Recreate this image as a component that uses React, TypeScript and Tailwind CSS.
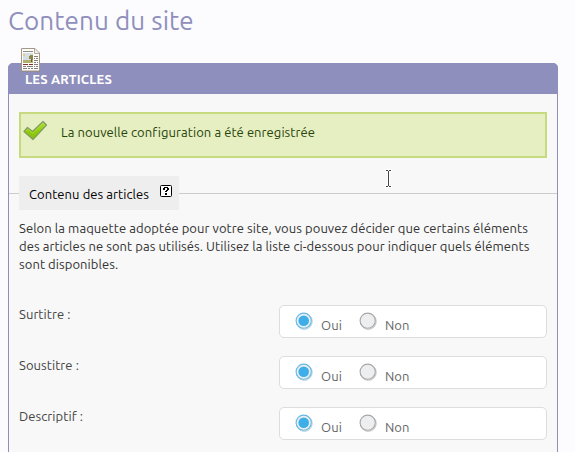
import React from "react";

const fields = ["Surtitre :", "Soustitre :", "Descriptif :"];

function ArticleIcon() {
  return (
    <svg className="absolute left-[11px] -top-4" width="22" height="25" viewBox="0 0 22 25">
      <path d="M1.5 1H15l5 5v18H1.5z" fill="#77716a" opacity=".45" />
      <path d="M1.5.5H15L19.5 5V23H1.5z" fill="#fdfcf8" stroke="#a39789" />
      <path d="M14.5 1v4.5H19" fill="#f1eee9" stroke="#b5aba0" />
      <path d="M3 3.5h10" stroke="#8f8b86" />
      <path d="M3 5h10v10H3z" fill="#d3dfe2" />
      <path d="M3 6h2v2H3z" fill="#f0c98c" />
      <path d="M3 12h10v3H3z" fill="#b1b06d" />
      <path d="M9 8h1V7h3v5h-2v-1H9z" fill="#8b8845" />
      <path d="M11.5 11v3" stroke="#685c39" />
      <path d="M3 16.5h5m1 0h4" stroke="#842f32" />
      <path d="M3 18.5h3m1 0h6M3 20.5h4m1 0h2m1 0h2M14 8.5h4M14 10.5h1m1 0h2M14 12.5h4M14 14.5h2m1 0h1M14 16.5h4M14 18.5h1m1 0h2M14 20.5h4" stroke="#85807c" />
    </svg>
  );
}

function CheckIcon() {
  return (
    <svg className="absolute left-[2px] top-[6px]" width="25" height="22" viewBox="0 0 25 22">
      <defs>
        <linearGradient id="check" x2="0" y2="1">
          <stop stopColor="#b6df43" />
          <stop offset=".5" stopColor="#91ce0c" />
          <stop offset="1" stopColor="#86bd08" />
        </linearGradient>
      </defs>
      <path d="M1 11.5 4.5 7.5l5 4L20 1.5l3.5 3.5L10 19.5z" fill="url(#check)" stroke="#829c63" strokeWidth="1.2" strokeLinejoin="round" />
      <path d="m3 11 1.7-1.9 5 4.2L20 3.2" fill="none" stroke="#b4e23a" strokeWidth=".7" />
    </svg>
  );
}

function Radio({ checked = false }: { checked?: boolean }) {
  return (
    <svg className="-mt-px" width="18" height="18" viewBox="0 0 18 18">
      <circle cx="9.3" cy="9.4" r="7.9" fill="none" stroke={checked ? "#a7cadd" : "#bdbdbd"} strokeWidth="1" />
      <circle cx="8.7" cy="8.7" r="7.6" fill="#edeef0" stroke={checked ? "#65b9e3" : "#a8a8a9"} strokeWidth="1.1" />
      {checked && <circle cx="8.7" cy="8.7" r="5.3" fill="#3daee9" />}
    </svg>
  );
}

function IBeam() {
  return (
    <svg className="absolute left-[375px] top-[104px]" width="10" height="22" viewBox="0 0 10 22">
      <path d="M1 2.5h7M4.5 2v17M1 18.5h7" stroke="white" strokeWidth="3" />
      <path d="M2 2.5h2m1 0h2M4.5 3v15M2 18.5h2m1 0h2" stroke="#444" />
    </svg>
  );
}

export default function App() {
  return (
    <main className="h-[452px] w-[575px] overflow-hidden bg-[#fcfcff] px-2 font-['Ubuntu','Noto_Sans',sans-serif] text-[13px] leading-[18px] tracking-[0.07px] text-[#333]">
      <h1 className="h-[63px] pt-[3px] text-[26px] leading-9 tracking-[0.1px] text-[#8f8fbd]"><span>Contenu du site</span></h1>
      <section className="relative h-[400px] w-[550px] rounded-t-[5px] border border-[#8f8fbd] bg-[#f8f8f8]">
        <h2 className="-mx-px -mt-px h-[31px] rounded-t-[5px] bg-[#8f8fbd] pl-[17px] pt-[7px] font-bold tracking-[0.15px] text-white"><span>LES ARTICLES</span></h2>
        <ArticleIcon />
        <div className="relative mx-[10px] mt-[18px] h-[46px] border-2 border-[#c8da7f] bg-[#e6efc2] pl-10 pt-[9px] text-[#264409]">
          <CheckIcon />
          <span>La nouvelle configuration a été enregistrée</span>
        </div>
        <IBeam />
        <div className="mt-[18px] flex h-[34px] items-center">
          <div className="h-px w-[10px] bg-[#ccc]" />
          <div className="flex h-[34px] w-[160px] bg-[#eee] pl-[10px] pt-[9px] text-black">
            <span className="w-[131px]">Contenu des articles</span>
            <svg width="12" height="12" viewBox="0 0 12 12">
              <rect x=".5" y=".5" width="11" height="11" rx="1" fill="white" stroke="black" />
              <path d="M4 2h4v1h1v2H8v1H7v1H5V6h1V5h1V3H5v2H3V3h1zM5 8h2v2H5z" fill="black" />
            </svg>
          </div>
          <div className="h-px flex-1 bg-[#ccc]" />
        </div>
        <p className="ml-[10px] mt-[9px] whitespace-nowrap">
          <span className="block">Selon la maquette adoptée pour votre site, vous pouvez décider que certains éléments</span>
          <span className="block">des articles ne sont pas utilisés. Utilisez la liste ci-dessous pour indiquer quels éléments</span>
          <span className="block">sont disponibles.</span>
        </p>
        <div className="mx-[10px] mt-[32px] flex flex-col gap-[18px]">
          {fields.map((label) => (
            <div key={label} className="flex h-[33px]">
              <div className="w-[260px] text-[#444]">{label}</div>
              <div className="flex flex-1 rounded-[5px] border border-[#ddd] bg-white pl-[15px] pt-[7px] text-[#666]">
                <Radio checked />
                <span className="ml-2 w-[38px] pt-[3px]">Oui</span>
                <Radio />
                <span className="ml-2 pt-[3px]">Non</span>
              </div>
            </div>
          ))}
        </div>
      </section>
    </main>
  );
}
